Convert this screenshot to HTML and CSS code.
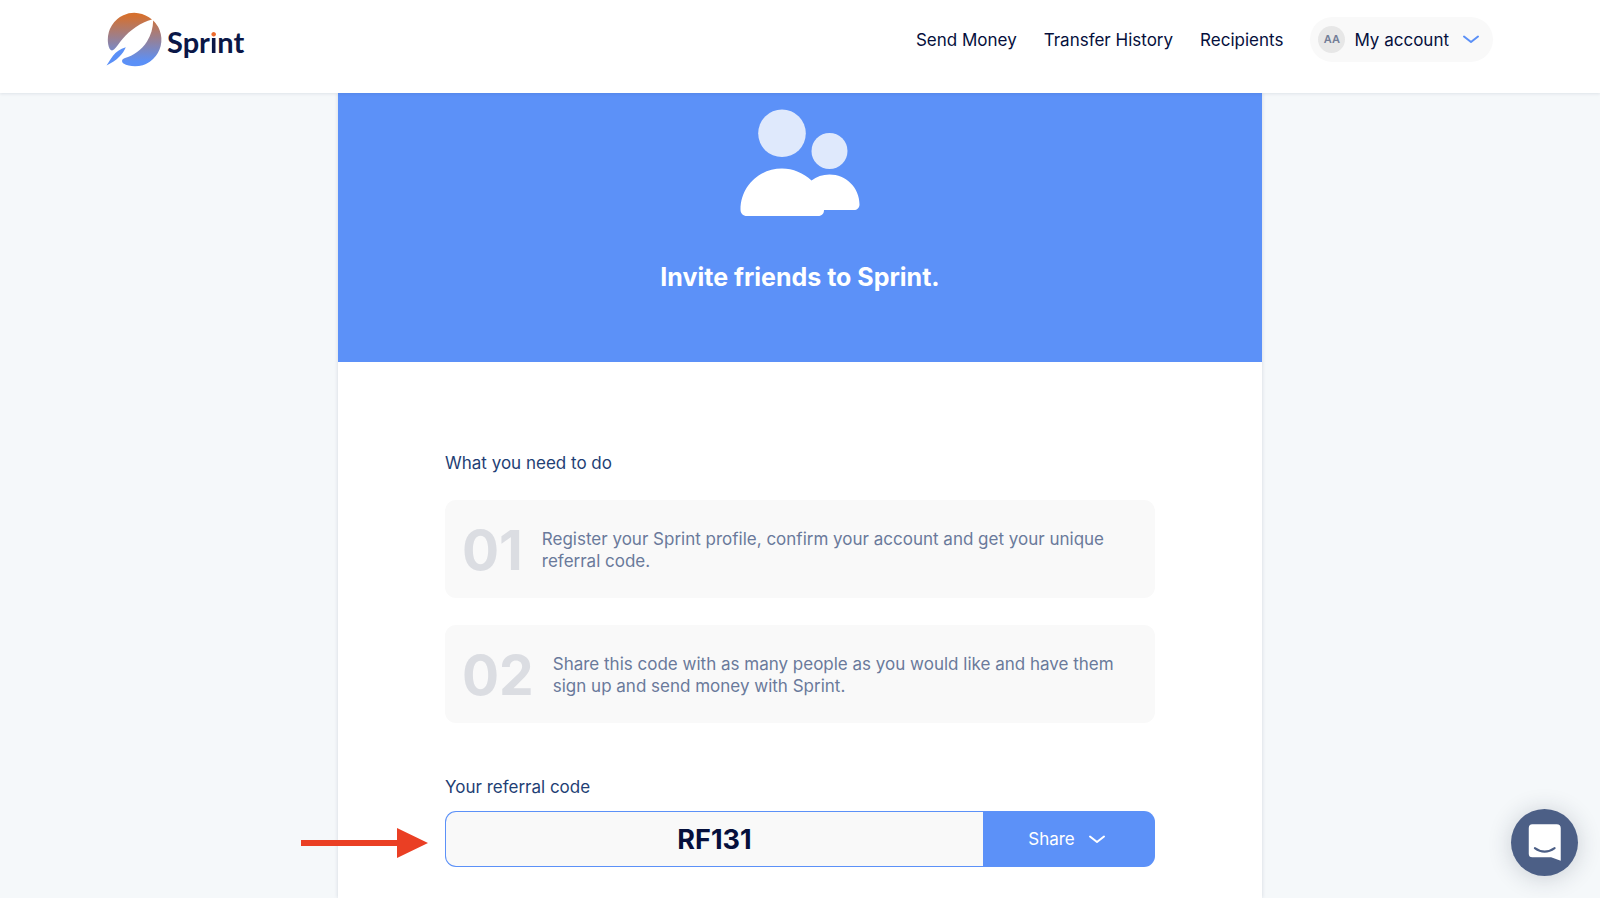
FILE: index.html
```html
<!DOCTYPE html>
<html lang="en">
<head>
<meta charset="utf-8">
<meta name="viewport" content="width=device-width, initial-scale=1">
<title>Sprint – Invite friends</title>
<link rel="stylesheet" href="styles.css">
</head>
<body>
<header class="header">
  <a class="brand" href="#">
    <svg class="brand-icon" viewBox="0 0 56 55" aria-hidden="true">
      <defs>
        <linearGradient id="brand-fill" gradientUnits="userSpaceOnUse" x1="0" y1="0" x2="0" y2="54">
          <stop offset="0.05" stop-color="#d5702f"/>
          <stop offset="0.9" stop-color="#5b90f7"/>
        </linearGradient>
      </defs>
      <path fill="url(#brand-fill)" d="M45 6.500C34 9.500 23 17 15.500 26C12 30.300 9.500 34 7 36.600C5.500 38 3.300 37.500 2.500 35.600C1.300 32.800 0.800 29.800 0.800 26.700A26.600 26.600 0 0 1 45 6.500Z"/>
      <path fill="url(#brand-fill)" d="M46.200 7.500A26.600 26.600 0 0 1 28 53.300C23.500 53.300 19.500 52.200 16.500 50.500C14 48.500 15 45.800 18 45C26 43 35 36.500 40 28.500C44 22 46 15 46.200 7.500Z"/>
      <path fill="#5b90f7" d="M18.800 34.300C13 36 9 39 6 42.700C3.500 46 1.500 49.500 -0.500 52.500C4.500 50 9 47.300 12.500 43.500C15.500 40.500 17.500 37.500 18.800 34.300Z"/>
    </svg>
    <span class="brand-name">Spr<span class="brand-i">i</span>nt</span>
  </a>
  <nav class="nav" aria-label="Main">
    <a href="#">Send Money</a>
    <a href="#">Transfer History</a>
    <a href="#">Recipients</a>
    <button class="account" type="button">
      <span class="avatar">AA</span>
      <span>My account</span>
      <svg class="chevron" viewBox="0 0 16 9" aria-hidden="true"><path d="M1 1.500L8 7L15 1.500"/></svg>
    </button>
  </nav>
</header>
<main class="card">
  <section class="hero">
    <svg class="friends" viewBox="0 0 120 108" aria-hidden="true">
      <circle cx="42" cy="24.300" r="23.800" fill="#dfe9fc"/>
      <circle cx="89.500" cy="42" r="18" fill="#dfe9fc"/>
      <path fill="#fff" d="M42 59.500C53 59.500 63.500 64 71.500 71.500C76.500 67.500 82.500 65.500 89.500 65.500C106 65.500 119.500 78.500 119.500 95.500C119.500 99 117 101 114 101H84C84 104.500 82 107 78 107H7C3 107 0.500 104.500 0.500 100.500C0.500 77.500 19 59.500 42 59.500Z"/>
    </svg>
    <h1 class="hero-title">Invite friends to Sprint.</h1>
  </section>
  <section class="content">
    <h2 class="label">What you need to do</h2>
    <ol class="steps">
      <li class="step"><span class="step-number">01</span><p>Register your Sprint profile, confirm your account and get your unique referral code.</p></li>
      <li class="step"><span class="step-number">02</span><p>Share this code with as many people as you would like and have them sign up and send money with Sprint.</p></li>
    </ol>
    <label class="label" for="code">Your referral code</label>
    <div class="code-row">
      <svg class="pointer" viewBox="0 0 127 30" aria-hidden="true"><path fill="#ea3f24" d="M0 12H96V0L127 15L96 30V18H0Z"/></svg>
      <input class="code" id="code" type="text" value="RF131" readonly>
      <button class="share" type="button">
        <span>Share</span>
        <svg class="chevron" viewBox="0 0 16 9" aria-hidden="true"><path d="M1 1.500L8 7L15 1.500"/></svg>
      </button>
    </div>
  </section>
</main>
<button class="chat" type="button" aria-label="Open chat">
  <svg viewBox="0 0 66 66" aria-hidden="true">
    <path fill="#fff" d="M21 15H45Q49 15 49 19V51L39.500 47.500H21Q17.500 47.500 17.500 44V19Q17.500 15 21 15Z"/>
    <path fill="none" stroke="#4c5f86" stroke-width="2" stroke-linecap="round" d="M23.500 38.500Q33 45.500 43 38.500"/>
  </svg>
</button>
</body>
</html>
```

FILE: styles.css
```css
* {
  box-sizing: border-box;
}

body {
  margin: 0;
  min-height: 100vh;
  display: flex;
  flex-direction: column;
  background: #f5f8fa;
  color: #050f3c;
  font: 400 17px/22px Inter, "Liberation Sans", sans-serif;
}

button,
input {
  font: inherit;
  color: inherit;
}

button {
  border: 0;
  cursor: pointer;
}

.header {
  position: sticky;
  top: 0;
  z-index: 1;
  display: flex;
  justify-content: space-between;
  align-items: flex-start;
  padding: 13px 107px 25px;
  background: #fff;
  box-shadow: 0 1px 3px rgba(30, 50, 80, 0.1);
}

.brand {
  display: flex;
  align-items: center;
  gap: 4px;
  color: #0a1747;
  text-decoration: none;
}

.brand-icon {
  width: 56px;
  height: 55px;
  overflow: visible;
}

.brand-name {
  padding-top: 2px;
  font: 700 29px/34px Lato, sans-serif;
}

.brand-i {
  background: linear-gradient(#ec6a2c 13px, #0a1747 13px);
  background-clip: text;
  -webkit-background-clip: text;
  color: transparent;
}

.nav {
  display: flex;
  align-items: center;
  gap: 27px;
  padding-top: 4px;
}

.nav a {
  color: inherit;
  text-decoration: none;
}

.account {
  display: flex;
  align-items: center;
  gap: 9px;
  height: 45px;
  padding: 0 14px 0 8px;
  border-radius: 23px;
  background: #f9f9f9;
}

.avatar {
  width: 27px;
  border-radius: 50%;
  background: #e7e7e7;
  color: #727d96;
  font-size: 11px;
  font-weight: 600;
  line-height: 27px;
  text-align: center;
}

.chevron {
  width: 16px;
  height: 9px;
  fill: none;
  stroke: #fff;
  stroke-width: 2;
  stroke-linecap: round;
  stroke-linejoin: round;
}

.account .chevron {
  margin-left: 5px;
  stroke: #5b90f7;
}

.card {
  flex: 1;
  width: 100%;
  max-width: 924px;
  margin: 0 auto;
  background: #fff;
  box-shadow: 0 0 4px rgba(30, 50, 80, 0.16);
}

.hero {
  display: flex;
  flex-direction: column;
  align-items: center;
  gap: 44px;
  padding: 16px 24px 69px;
  background: #5c91f8;
  color: #fff;
}

.friends {
  width: 120px;
  height: 108px;
}

.hero-title {
  margin: 0;
  font-size: 25px;
  font-weight: 700;
  line-height: 32px;
}

.content {
  padding: 90px 107px 0;
}

.label {
  display: block;
  margin: 0;
  color: #1f3f75;
  font-size: 17px;
  font-weight: 400;
}

.steps {
  display: grid;
  gap: 27px;
  margin: 26px 0 53px;
  padding: 0;
  list-style: none;
}

.step {
  display: flex;
  align-items: center;
  gap: 19px;
  min-height: 98px;
  padding: 2px 40px 0 17px;
  border-radius: 11px;
  background: #f9f9f9;
  color: #6a7a9b;
}

.step p {
  margin: 0;
}

.step-number {
  color: #dbdde2;
  font-size: 55px;
  font-weight: 700;
  line-height: 66px;
}

.code-row {
  position: relative;
  display: flex;
  height: 56px;
  margin-top: 13px;
}

.pointer {
  position: absolute;
  right: calc(100% + 17px);
  top: 17px;
  width: 127px;
  height: 30px;
}

.code {
  flex: 1;
  min-width: 0;
  border: 1px solid #5c91f8;
  border-right: 0;
  border-radius: 11px 0 0 11px;
  background: #f9f9f9;
  color: #050f3c;
  font-size: 27px;
  font-weight: 700;
  text-align: center;
}

.share {
  display: flex;
  align-items: center;
  justify-content: center;
  gap: 14px;
  width: 172px;
  padding: 0 5px 0 0;
  border-radius: 0 11px 11px 0;
  background: #5c91f8;
  color: #fff;
}

.chat {
  position: fixed;
  right: 22px;
  bottom: 22px;
  width: 67px;
  height: 67px;
  padding: 0;
  border-radius: 50%;
  background: #4c5f86;
  box-shadow: 0 2px 24px rgba(30, 40, 60, 0.2);
}

.chat svg {
  display: block;
}
```
